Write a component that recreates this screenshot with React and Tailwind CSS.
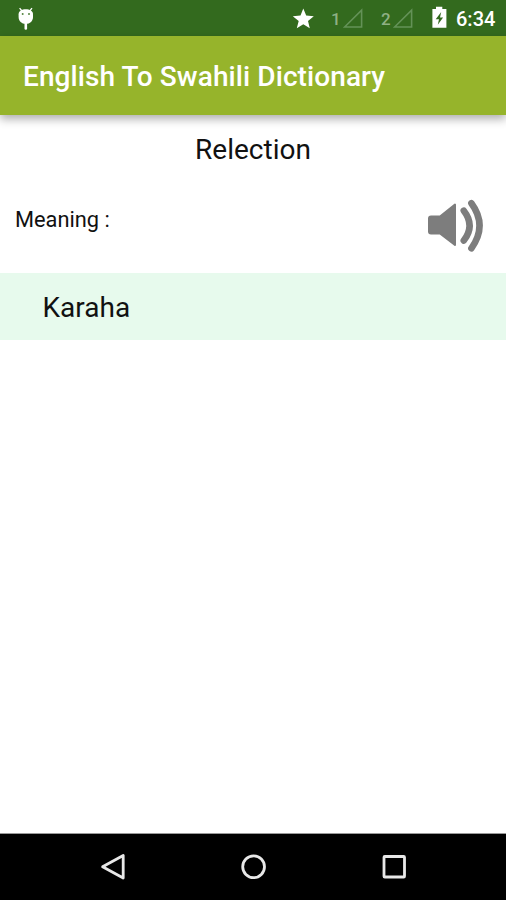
function AndroidIcon() {
  return (
    <svg className="h-9 w-5 shrink-0" viewBox="16 0 20 36" fill="#fff">
      <path d="M19.6 8.2 L22 11 M32 8.2 L29.7 11" stroke="#fff" strokeWidth="1.3" />
      <path d="M18.6 14.2C18.6 11 22 9.3 25.8 9.3S33 11 33 14.2V17c0 4-3 6.9-7.2 6.9S18.6 21 18.6 17Z" />
      <rect x="24.5" y="22.5" width="2.6" height="7.3" rx="1.2" />
      <circle cx="22.7" cy="13.9" r="1" fill="#568541" />
      <circle cx="29" cy="13.9" r="1" fill="#568541" />
    </svg>
  );
}

function SignalIcon() {
  return (
    <svg className="h-9 w-5 shrink-0" viewBox="0 0 20 36" fill="none" stroke="#649257" strokeWidth="1.6">
      <path d="M1.6 27 L18.6 10.2 V27 Z" />
    </svg>
  );
}

function StatusBar() {
  return (
    <header className="flex h-9 shrink-0 items-center bg-[#336a1e] pl-4 text-white">
      <AndroidIcon />
      <svg className="ml-[256px] h-9 w-6 shrink-0" viewBox="292 0 24 36" fill="#fff">
        <path d="M303.3 8.6 L306.2 15.6 L313.8 16.2 L308 21.1 L309.8 28.3 L303.3 24.3 L296.8 28.3 L298.7 21.1 L292.8 16.2 L300.5 15.6 Z" />
      </svg>
      <span className="ml-[15px] mt-[3px] w-3 text-[17px] font-medium leading-none text-[#8fb084]">1</span>
      <SignalIcon />
      <span className="ml-[18px] mt-[3px] w-3 text-[17px] font-medium leading-none text-[#8fb084]">2</span>
      <SignalIcon />
      <svg className="ml-[18px] h-9 w-4 shrink-0" viewBox="431 0 16 36">
        <path d="M436 6.8h6.3v2.3h4.1v18.7h-14V9.1h3.6z" fill="#fff" />
        <path d="M441.2 12 L435.7 19.2 H439 L437.8 24.8 L443.1 17.5 H440 Z" fill="#336a1e" />
      </svg>
      <span className="ml-[9px] mt-[2px] whitespace-nowrap text-[20px] font-medium leading-none">6:34</span>
    </header>
  );
}

function SpeakerIcon() {
  return (
    <svg className="h-[54px] w-[58px] shrink-0" viewBox="427 199 58 54" fill="none">
      <path d="M431 216.5H440L455 204.5V245L440 233.5H431Q429 233.5 429 231.5V218.5Q429 216.5 431 216.5Z" fill="#7d7d7d" stroke="#7d7d7d" strokeWidth="2" strokeLinejoin="round" />
      <path d="M463.8 210.7Q475.4 225.5 463.8 240.6" stroke="#7d7d7d" strokeWidth="6.6" strokeLinecap="round" />
      <path d="M471.4 203.2Q487.7 225.5 471.4 248.3" stroke="#7d7d7d" strokeWidth="6.6" strokeLinecap="round" />
    </svg>
  );
}

function NavigationBar() {
  return (
    <nav className="flex h-[67px] shrink-0 items-center justify-between border-t border-[#999] bg-black px-[98px]">
      <svg className="h-7 w-7" viewBox="98 853 28 28" fill="none" stroke="#e8e8e8" strokeWidth="2.8">
        <path d="M102.6 866.8 L123.2 855.5 V878.1 Z" strokeLinejoin="round" />
      </svg>
      <svg className="h-7 w-7" viewBox="239 853 28 28" fill="none" stroke="#e8e8e8" strokeWidth="2.8">
        <circle cx="253.6" cy="866.8" r="10.9" />
      </svg>
      <svg className="h-7 w-7" viewBox="380 853 28 28" fill="none" stroke="#e8e8e8" strokeWidth="2.8">
        <rect x="384" y="856.5" width="20.5" height="20.5" rx="0.8" />
      </svg>
    </nav>
  );
}

export default function App() {
  return (
    <div className="flex h-[900px] w-[506px] flex-col overflow-hidden bg-white font-[Roboto,sans-serif] text-[#111]">
      <StatusBar />
      <div className="z-10 flex h-[79px] shrink-0 items-center bg-[#96b42b] pl-[23px] shadow-[0_4px_9px_rgba(0,0,0,0.32)]">
        <h1 className="mt-0.5 whitespace-nowrap text-[28px] font-medium leading-none tracking-[0.09px] text-white">English To Swahili Dictionary</h1>
      </div>
      <main className="flex flex-1 flex-col">
        <h2 className="pt-[20px] text-center text-[28px] leading-[30px]">Relection</h2>
        <div className="mt-[34px] flex h-[54px] items-center justify-between pl-[15px] pr-[21px]">
          <span className="-mt-[13px] text-[21.8px] leading-none">Meaning :</span>
          <SpeakerIcon />
        </div>
        <div className="mt-5 flex h-[67px] items-center bg-[#e7faed] pl-[42.5px] text-[28px] leading-none">
          <span className="mt-[3px]">Karaha</span>
        </div>
      </main>
      <NavigationBar />
    </div>
  );
}
